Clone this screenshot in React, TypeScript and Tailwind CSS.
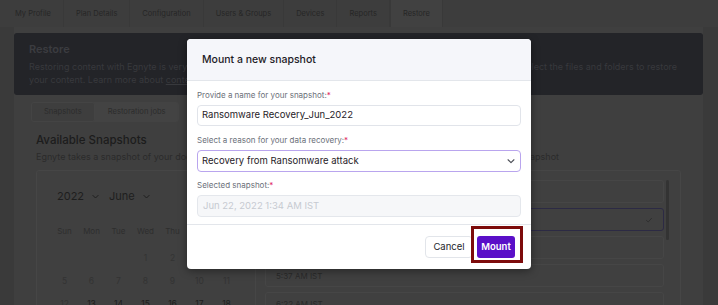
import React from "react";

const tabs = ["My Profile", "Plan Details", "Configuration", "Users & Groups", "Devices", "Reports", "Restore"];
const weekdays = ["Sun", "Mon", "Tue", "Wed", "Thu", "Fri", "Sat"];
const rows: (number | null)[][] = [
  [null, null, null, 1, 2, 3, 4],
  [5, 6, 7, 8, 9, 10, 11],
  [12, 13, 14, 15, 16, 17, 18],
];

function Chevron({ className = "" }: { className?: string }) {
  return (
    <svg viewBox="0 0 12 12" className={className} fill="none" stroke="currentColor" strokeWidth="1.3" strokeLinecap="round" strokeLinejoin="round">
      <path d="M2.5 4.5 6 8l3.5-3.5" />
    </svg>
  );
}

export default function App() {
  return (
    <div className="relative w-[718px] h-[305px] overflow-hidden bg-[#3f3f3f] font-['Inter',sans-serif]">
      {/* tab bar */}
      <div className="flex h-[27px] pl-[3px] bg-[#3d3d3d]">
        {tabs.map((t) => (
          <div
            key={t}
            className={
              "flex items-center px-3 whitespace-nowrap text-[7.5px] text-[#262626] border-r border-[#393939] " +
              (t === "Restore" ? "bg-[#414141] border-l" : "")
            }
          >
            {t}
          </div>
        ))}
      </div>
      <div className="flex h-[278px]">
        <div className="w-[14px] shrink-0 bg-[#3a3a3a]" />
        <div className="flex-1 min-w-0 flex flex-col pt-[6px]">
          {/* banner */}
          <div className="shrink-0 h-[62px] rounded-[3px] bg-[#232428] pl-[15px] pt-[8px] text-[#38393d] overflow-hidden">
            <div className="text-[11px] font-semibold text-[#3b3c40] leading-[16px]">Restore</div>
            <div className="text-[9px] leading-[13px] mt-[3px] whitespace-nowrap">
              Restoring content with Egnyte is very simple and quick. Pick a snapshot, mount it to a new folder on drive, and then select the files and folders to restore
            </div>
            <div className="text-[9px] leading-[13px] whitespace-nowrap">
              your content. Learn more about <span className="underline">content restore</span>.
            </div>
          </div>
          {/* segmented */}
          <div className="shrink-0 self-start ml-[17px] mt-[7px] flex h-[20px] rounded-[3px] bg-[#434343] text-[7.6px] text-[#2c2c2c] whitespace-nowrap">
            <div className="flex items-center px-[12px] bg-[#3e3e3e] rounded-[3px] border border-[#444]">Snapshots</div>
            <div className="flex items-center px-[13px]">Restoration jobs</div>
          </div>
          <div className="shrink-0 ml-[22px] mt-[11px] text-[11.5px] font-medium text-[#1c1c1c] leading-[14px]">Available Snapshots</div>
          <div className="shrink-0 ml-[22px] mt-[3px] text-[9px] text-[#2b2b2b] leading-[13px] whitespace-nowrap">
            Egnyte takes a snapshot of your documents every four hours. Select a date below to view and mount an available snapshot
          </div>
          {/* card */}
          <div className="ml-[22px] mr-[22px] mt-[7px] h-[200px] shrink-0 flex rounded-t-[3px] border border-[#464646] bg-[#404040]">
            <div className="w-[219px] border-r border-[#464646] pl-[14px] pt-[17px]">
              <div className="flex items-center text-[11px] text-[#1e1e1e] pl-[6px]">
                <span className="flex items-center gap-[7px]">2022 <Chevron className="w-[9px] h-[9px]" /></span>
                <span className="flex items-center gap-[7px] ml-[9px]">June <Chevron className="w-[9px] h-[9px]" /></span>
              </div>
              <div className="grid grid-cols-7 w-[189px] mt-[20px] text-[8px] text-[#2e2e2e] text-center">
                {weekdays.map((d) => (
                  <div key={d} className="h-[12px]">{d}</div>
                ))}
              </div>
              <div className="grid grid-cols-7 w-[189px] mt-[15px] text-[8.5px] text-center">
                {rows.flat().map((d, i) => (
                  <div
                    key={i}
                    className={"h-[23px] " + (d !== null && d >= 13 ? "text-[#1e1e1e]" : "text-[#333333]")}
                  >
                    {d ?? ""}
                  </div>
                ))}
              </div>
            </div>
            <div className="flex-1 flex pl-[9px] pt-[9px] pr-[11px] gap-[2px]">
              <div className="flex-1 flex flex-col gap-[5px]">
                {["1:34 AM IST", "2:49 AM IST", "4:05 AM IST", "5:37 AM IST", "6:22 AM IST"].map((t, i) => (
                  <div
                    key={t}
                    className={
                      "h-[23px] shrink-0 rounded-[3px] border flex items-center justify-between pl-[10px] pr-[10px] text-[8px] text-[#2a2a2a] " +
                      (i === 1 ? "border-[#2c2a44]" : "border-[#464646]")
                    }
                  >
                    <span>{t}</span>
                    {i === 1 && (
                      <svg viewBox="0 0 10 10" className="w-[8px] h-[8px] text-[#2e2e2e]" fill="none" stroke="currentColor" strokeWidth="1.2">
                        <path d="M1.5 5.2 4 7.5l4.5-5" />
                      </svg>
                    )}
                  </div>
                ))}
              </div>
              <div className="w-[3px] h-[60px] rounded bg-[#333333]" />
            </div>
          </div>
        </div>
        <div className="w-[15px] shrink-0 bg-[#3a3a3a]" />
      </div>

      {/* modal */}
      <div className="absolute left-[187px] top-[39px] w-[344px] rounded-[4px] bg-white overflow-hidden shadow-[0_2px_8px_rgba(0,0,0,0.4)]">
        <div className="h-[42px] bg-[#f5f6fa] border-b border-[#e3e6eb] flex items-center pl-[15px]">
          <span className="text-[10.5px] font-medium text-[#1d2026]">Mount a new snapshot</span>
        </div>
        <div className="px-[10px] pt-[9px] pb-[7px] border-b border-[#e3e6eb]">
          <div className="text-[8px] leading-[11px] text-[#6b7079]">
            Provide a name for your snapshot:<span className="text-[#e0245e]">*</span>
          </div>
          <div className="mt-[4px] h-[21px] rounded-[4px] border border-[#e1e4ea] flex items-center pl-[4px] text-[9.5px] text-[#1f2228]">
            Ransomware Recovery_Jun_2022
          </div>
          <div className="mt-[9px] text-[8px] leading-[11px] text-[#6b7079]">
            Select a reason for your data recovery:<span className="text-[#e0245e]">*</span>
          </div>
          <div className="mt-[4px] h-[22px] rounded-[4px] border border-[#b9a5ee] flex items-center justify-between pl-[4px] pr-[4px] text-[9.5px] text-[#1f2228]">
            <span>Recovery from Ransomware attack</span>
            <Chevron className="w-[10px] h-[10px] text-[#4a4d55]" />
          </div>
          <div className="mt-[8px] text-[8px] leading-[11px] text-[#6b7079]">
            Selected snapshot:<span className="text-[#e0245e]">*</span>
          </div>
          <div className="mt-[4px] h-[22px] rounded-[4px] border border-[#e4e7ec] bg-[#f6f7f9] flex items-center pl-[5px] text-[9.5px] text-[#c6cad1]">
            Jun 22, 2022 1:34 AM IST
          </div>
        </div>
        <div className="h-[44px] flex items-center justify-end gap-[4px] pr-[16px]">
          <button className="h-[22px] w-[48px] rounded-[4px] border border-[#e2e5ea] bg-white text-[9.5px] text-[#23262c]">Cancel</button>
          <button className="h-[22px] w-[38px] rounded-[3px] bg-[#5a0fc8] text-[9.5px] font-semibold text-white">Mount</button>
        </div>
        <div className="absolute left-[284px] top-[187px] w-[52px] h-[37px] border-[3px] border-[#7d0b0b]" />
      </div>
    </div>
  );
}
